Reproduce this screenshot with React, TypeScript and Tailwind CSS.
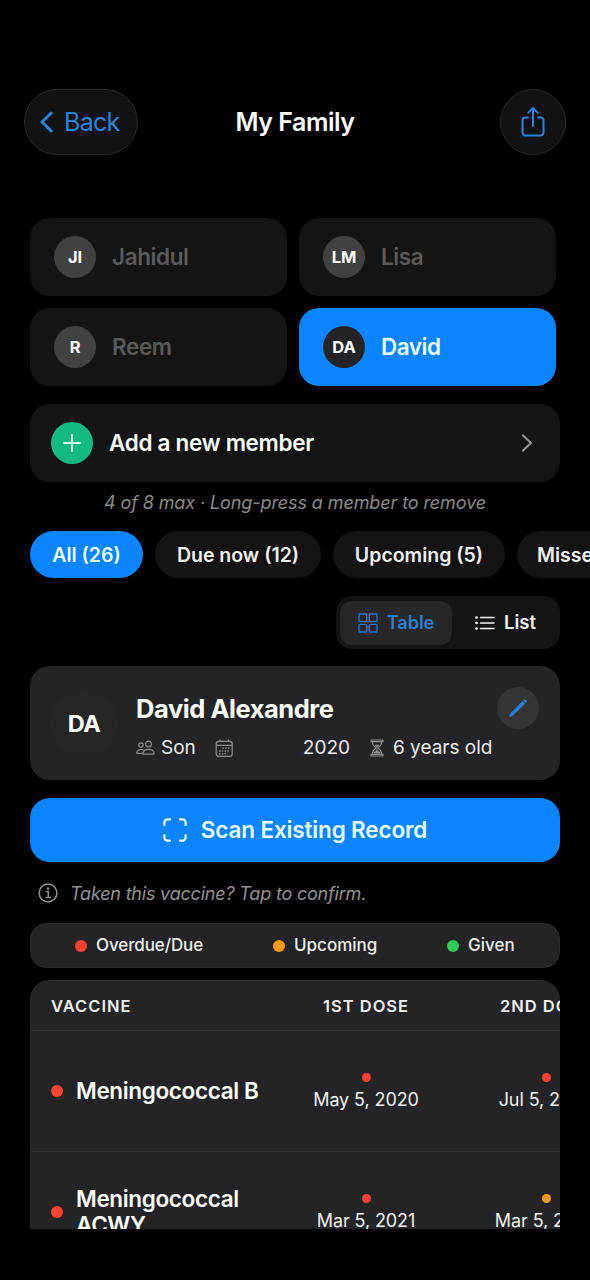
import { useState } from "react";
import clsx from "clsx";

type Status = "due" | "upcoming" | "given";

const members = [
  { initials: "JI", name: "Jahidul" },
  { initials: "LM", name: "Lisa" },
  { initials: "R", name: "Reem" },
  { initials: "DA", name: "David" },
];

const filters = [
  { label: "All (26)", width: "w-[113px]" },
  { label: "Due now (12)", width: "w-[166px]" },
  { label: "Upcoming (5)", width: "w-[172px]" },
  { label: "Missed (9)", width: "w-[140px]" },
];

const vaccines: { name: string; status: Status; doses: { date: string; status: Status }[] }[] = [
  {
    name: "Meningococcal B",
    status: "due",
    doses: [
      { date: "May 5, 2020", status: "due" },
      { date: "Jul 5, 2020", status: "due" },
    ],
  },
  {
    name: "Meningococcal ACWY",
    status: "due",
    doses: [
      { date: "Mar 5, 2021", status: "due" },
      { date: "Mar 5, 2026", status: "upcoming" },
    ],
  },
];

const dotColor: Record<Status, string> = {
  due: "bg-[#fb4236]",
  upcoming: "bg-[#f99a12]",
  given: "bg-[#34c759]",
};

function Dot({ status, small }: { status: Status; small?: boolean }) {
  return (
    <span
      className={clsx("shrink-0 rounded-full", small ? "h-[9px] w-[9px]" : "h-3 w-3", dotColor[status])}
    />
  );
}

function ShareIcon() {
  return (
    <svg width="26" height="32" viewBox="0 0 26 32" fill="none" stroke="#2a83e0" strokeWidth="2" strokeLinecap="round" strokeLinejoin="round">
      <path d="M8 11.5H5.5A3 3 0 0 0 2.500 14.500V26.500A3 3 0 0 0 5.500 29.500H20.500A3 3 0 0 0 23.500 26.500V14.500A3 3 0 0 0 20.500 11.500H18" />
      <path d="M13 20V2M8.300 6.600L13 2L17.700 6.600" />
    </svg>
  );
}

function GridIcon() {
  return (
    <svg width="20" height="20" viewBox="0 0 20 20" fill="none" stroke="#2377d2" strokeWidth="1.400">
      <rect x="1" y="1" width="7.600" height="7.600" rx="1" />
      <rect x="11.400" y="1" width="7.600" height="7.600" rx="1" />
      <rect x="1" y="11.400" width="7.600" height="7.600" rx="1" />
      <rect x="11.400" y="11.400" width="7.600" height="7.600" rx="1" />
    </svg>
  );
}

function ListIcon() {
  return (
    <svg width="20" height="16" viewBox="0 0 20 16" fill="none" stroke="#f2f2f4" strokeWidth="1.500" strokeLinecap="round">
      <path d="M5.500 2.500H19M5.500 8H19M5.500 13.500H19" />
      <path d="M1.500 2.500H1.600M1.500 8H1.600M1.500 13.500H1.600" strokeWidth="2.600" />
    </svg>
  );
}

function PeopleIcon() {
  return (
    <svg width="19" height="16" viewBox="0 0 19 16" fill="none" stroke="#8e8e93" strokeWidth="1.200" strokeLinejoin="round">
      <circle cx="12.500" cy="4" r="2.900" />
      <circle cx="5" cy="5" r="2.200" />
      <path d="M7.500 14.200C6.900 14.200 6.800 13.700 6.900 13.200C7.400 10.900 9.700 9.400 12.500 9.400S17.600 10.900 18.100 13.200C18.200 13.700 18.100 14.200 17.500 14.200Z" />
      <path d="M7.800 10.200C7 9.700 6 9.500 5 9.500C2.800 9.500 1.100 10.800 0.800 12.700C0.700 13.100 0.900 13.400 1.300 13.400H6.800" />
    </svg>
  );
}

function CalendarIcon() {
  return (
    <svg width="19" height="19" viewBox="0 0 19 19" fill="none" stroke="#8e8e93" strokeWidth="1.200">
      <rect x="1.200" y="2.400" width="16" height="15" rx="2.400" />
      <path d="M1.200 6.400H17.200M5 .6V2.400M13.400 .6V2.400" />
      <path d="M7.300 9.200H15M4 12H15M4 14.800H12.500" strokeWidth="1.500" strokeDasharray="1.500 1.300" />
    </svg>
  );
}

function HourglassIcon() {
  return (
    <svg width="14" height="18" viewBox="0 0 14 18" fill="none" stroke="#8e8e93" strokeWidth="1.100" strokeLinejoin="round">
      <path d="M1 1H13V2.600H1ZM1 15.400H13V17H1Z" />
      <path d="M2.300 2.600C2.300 6 3.300 7 5.300 8.300C5.900 8.700 5.900 9.300 5.300 9.700C3.300 11 2.300 12 2.300 15.400M11.700 2.600C11.700 6 10.700 7 8.700 8.300C8.100 8.700 8.100 9.300 8.700 9.700C10.700 11 11.700 12 11.700 15.400" />
      <path d="M4.300 5.800H9.700L7.500 8V11.200L10 13.300V14.500H4V13.300L6.500 11.200V8Z" fill="#8e8e93" stroke="none" />
    </svg>
  );
}

function PencilIcon() {
  return (
    <svg width="20" height="20" viewBox="0 0 20 20" fill="#2583e3">
      <path d="M1.700 18.700Q1.100 18.400 1.500 17.500L2.500 15.200L14.600 3.300L17 5.700L4.900 17.600L2.600 18.700Q2 18.900 1.700 18.700Z" />
      <path d="M15.300 2.600L16 1.900Q17 1 18.100 2Q19.200 3.200 18.300 4.300L17.600 5Z" />
    </svg>
  );
}

function ScanIcon() {
  return (
    <svg width="24" height="24" viewBox="0 0 24 24" fill="none" stroke="#e8ffff" strokeWidth="2.200" strokeLinecap="round">
      <path d="M1.400 7V4.400A3 3 0 0 1 4.400 1.400H7M17 1.400H19.600A3 3 0 0 1 22.600 4.400V7M22.600 17V19.600A3 3 0 0 1 19.600 22.600H17M7 22.600H4.400A3 3 0 0 1 1.400 19.600V17" />
    </svg>
  );
}

function InfoIcon() {
  return (
    <svg width="20" height="20" viewBox="0 0 20 20" fill="none" stroke="#929292" strokeWidth="1.500" strokeLinecap="round">
      <circle cx="10" cy="10" r="8.900" />
      <path d="M8.300 8.600H10.300V14.200M8 14.400H12.500" />
      <circle cx="10" cy="5.500" r="1.200" fill="#929292" stroke="none" />
    </svg>
  );
}

export default function App() {
  const [selected, setSelected] = useState("David");
  const [filter, setFilter] = useState("All (26)");
  const [view, setView] = useState("table");

  return (
    <div className="flex h-[1280px] w-[590px] flex-col overflow-hidden bg-black pt-[89px] font-['Inter',sans-serif] whitespace-nowrap text-white">
      <header className="flex h-[66px] shrink-0 items-center justify-between px-6">
        <button className="flex h-[66px] w-[114px] items-center gap-[11px] rounded-full border border-[#2b2b2b] bg-[#121212] pl-[15px] text-[25px] tracking-[-0.7px] text-[#2a83e0]">
          <svg width="13" height="22" viewBox="0 0 13 22" fill="none" stroke="currentColor" strokeWidth="3" strokeLinecap="round" strokeLinejoin="round">
            <path d="M11.200 2L2 11L11.200 20" />
          </svg>
          <span className="pt-[2px]">Back</span>
        </button>
        <h1 className="mr-[4px] ml-[4px] pt-px text-[25px] font-semibold tracking-[-0.5px]">My Family</h1>
        <button className="ml-12 flex h-[66px] w-[66px] items-center justify-center rounded-full border border-[#2b2b2b] bg-[#121212]" aria-label="Share">
          <ShareIcon />
        </button>
      </header>

      <div className="mt-[63px] ml-[30px] grid w-[526px] shrink-0 grid-cols-2 gap-3">
        {members.map((m) => {
          const active = selected === m.name;
          return (
            <button
              key={m.name}
              onClick={() => setSelected(m.name)}
              className={clsx(
                "flex h-[78px] items-center gap-4 rounded-[20px] pl-6 text-[22.5px] font-semibold",
                active ? "bg-[#0a84ff] tracking-[-0.5px] text-[#eaffff]" : "bg-[#141414] tracking-[-0.4px] text-[#5a5a5a]",
              )}
            >
              <span
                className={clsx(
                  "flex h-[42px] w-[42px] items-center justify-center rounded-full text-[16.5px] font-bold tracking-[-0.1px] text-white",
                  active ? "bg-[#242426]" : "bg-[#414141]",
                )}
              >
                {m.initials}
              </span>
              {m.name}
            </button>
          );
        })}
      </div>

      <button className="mt-[18px] ml-[30px] flex h-[78px] w-[530px] shrink-0 items-center rounded-[20px] bg-[#141414] pr-[27px] pl-[21px]">
        <span className="flex h-[42px] w-[42px] items-center justify-center rounded-full bg-[#13b981]">
          <svg width="18" height="18" viewBox="0 0 18 18" stroke="#dfffee" strokeWidth="1.800" strokeLinecap="round">
            <path d="M9 1V17M1 9H17" />
          </svg>
        </span>
        <span className="ml-4 flex-1 text-left text-[22.5px] font-semibold tracking-[-0.3px]">Add a new member</span>
        <svg width="12" height="18" viewBox="0 0 12 18" fill="none" stroke="#929292" strokeWidth="2.200" strokeLinecap="round" strokeLinejoin="round">
          <path d="M2 1.500L10 9L2 16.500" />
        </svg>
      </button>
      <p className="mt-2 shrink-0 text-center text-[18px] leading-[26px] tracking-[-0.1px] text-[#8a8a8a] italic">
        4 of 8 max · Long-press a member to remove
      </p>

      <div className="mt-[15px] flex shrink-0 gap-3 overflow-hidden pl-[30px]">
        {filters.map((f) => (
          <button
            key={f.label}
            onClick={() => setFilter(f.label)}
            className={clsx(
              "h-[47px] shrink-0 rounded-full pt-[3px] text-[19.5px] font-semibold",
              f.width,
              filter === f.label ? "bg-[#0a84ff] text-[#eaffff]" : "bg-[#141414] text-[#f0f0f2]",
            )}
          >
            {f.label}
          </button>
        ))}
      </div>

      <div className="mt-[18px] ml-[336px] flex h-[53px] w-[224px] shrink-0 items-center rounded-[16px] bg-[#141414] px-1 text-[18px] font-semibold">
        <button
          onClick={() => setView("table")}
          className={clsx("flex h-[44px] w-[112px] items-center justify-center gap-[9px] rounded-[12px]", view === "table" ? "bg-[#272728] text-[#2d7fd2]" : "text-[#f2f2f4]")}
        >
          <GridIcon />
          Table
        </button>
        <button
          onClick={() => setView("list")}
          className={clsx("flex h-[44px] flex-1 items-center justify-center gap-[9px] rounded-[12px] pl-[3px] text-[18.5px]", view === "list" ? "bg-[#272728] text-[#2d7fd2]" : "text-[#f2f2f4]")}
        >
          <ListIcon />
          List
        </button>
      </div>

      <section className="mt-[17px] ml-[30px] flex h-[114px] w-[530px] shrink-0 rounded-[20px] bg-[#242426] pr-[21px] pl-5">
        <div className="flex h-[68px] w-[68px] items-center justify-center self-center rounded-full bg-[#262626] pt-[2px] text-[23.5px] font-bold tracking-[-0.4px]">
          DA
        </div>
        <div className="ml-[18px] flex-1 pt-[27px]">
          <h2 className="text-[25.5px] leading-8 font-bold tracking-[-0.45px]">David Alexandre</h2>
          <div className="mt-[10px] flex items-center text-[19px] leading-[26px] text-[#eaeaec]">
            <PeopleIcon />
            <span className="ml-[6px]">Son</span>
            <span className="ml-[19px]"><CalendarIcon /></span>
            <span className="ml-[69px]">2020</span>
            <span className="ml-[20px]"><HourglassIcon /></span>
            <span className="ml-[9px]">6 years old</span>
          </div>
        </div>
        <button className="mt-[21px] -ml-12 flex h-[42px] w-[42px] items-center justify-center rounded-full bg-[#353537]" aria-label="Edit">
          <PencilIcon />
        </button>
      </section>

      <button className="mt-[18px] ml-[30px] flex h-[64px] w-[530px] shrink-0 items-center justify-center gap-[14px] rounded-[20px] bg-[#0a84ff] text-[22.5px] font-semibold tracking-[-0.15px] text-[#e8ffff]">
        <ScanIcon />
        Scan Existing Record
      </button>

      <div className="mt-[18px] ml-[38px] flex h-[26px] shrink-0 items-center gap-3 text-[18px] tracking-[-0.2px] text-[#929292] italic">
        <InfoIcon />
        Taken this vaccine? Tap to confirm.
      </div>

      <div className="mt-[17px] ml-[30px] flex h-[45px] w-[530px] shrink-0 items-center rounded-[16px] border border-[#2b2b2d] bg-[#242426] pl-[44px] text-[17px] font-medium text-[#efeff1]">
        <span className="flex w-[198px] items-center gap-[9px] tracking-[-0.1px]"><Dot status="due" />Overdue/Due</span>
        <span className="flex w-[174px] items-center gap-[9px]"><Dot status="upcoming" />Upcoming</span>
        <span className="flex items-center gap-[9px]"><Dot status="given" />Given</span>
      </div>

      <div className="mt-3 ml-[30px] h-[249px] w-[530px] shrink-0 overflow-hidden rounded-t-[20px] border-t border-l border-[#2d2d2f] bg-[#242426]">
        <div className="w-[700px]">
          <div className="flex h-[50px] items-center border-b border-[#333335] pt-px text-[16.5px] font-semibold tracking-[1px] text-[#f0f0f2]">
            <span className="w-[245px] pl-5">VACCINE</span>
            <span className="w-[180px] text-center">1ST DOSE</span>
            <span className="w-[180px] text-center">2ND DOSE</span>
          </div>
          {vaccines.map((v) => (
            <div key={v.name} className="flex h-[121px] items-center border-b border-[#333335]">
              <div className="flex w-[245px] items-center gap-[13px] pl-5">
                <Dot status={v.status} />
                <span className="w-[190px] text-[22.5px] leading-[26px] font-semibold tracking-[-0.35px] whitespace-normal">{v.name}</span>
              </div>
              {v.doses.map((d) => (
                <div key={d.date} className="flex w-[180px] flex-col items-center gap-[6px] pt-[3px]">
                  <Dot status={d.status} small />
                  <span className="text-[18px] leading-[24px] tracking-[-0.1px] text-[#f0f0f2]">{d.date}</span>
                </div>
              ))}
            </div>
          ))}
        </div>
      </div>
    </div>
  );
}
